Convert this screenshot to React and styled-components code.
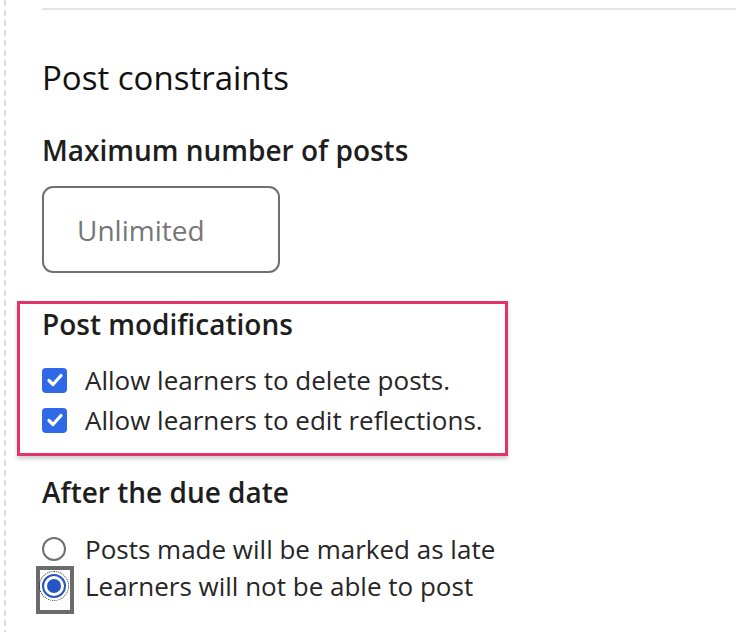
import React from 'react';
import styled, { createGlobalStyle } from 'styled-components';

const GlobalStyle = createGlobalStyle`
  html, body {
    margin: 0;
    padding: 0;
    background: #fff;
  }
  body {
    font-family: "Open Sans", "Noto Sans", sans-serif;
    color: #262626;
  }
`;

const Page = styled.div`
  width: 736px;
  height: 632px;
  overflow: hidden;
  display: flex;
  background-image: linear-gradient(#dcdcdc 60%, transparent 60%);
  background-size: 2px 10px;
  background-repeat: repeat-y;
  background-position: 4px 0;
`;

const Content = styled.div`
  flex: 1;
  margin-left: 42px;
  border-top: 2px solid #e5e5e5;
  margin-top: 8px;
  padding-top: 45px;
`;

const Title = styled.h2`
  margin: 0 0 31px;
  font-size: 33px;
  line-height: 45px;
  font-weight: 500;
  color: #111;
`;

const Label = styled.h3`
  margin: 0;
  font-size: 28px;
  line-height: 38px;
  font-weight: 600;
  color: #1e1e1e;
`;

const Input = styled.div`
  width: 238px;
  height: 87px;
  box-sizing: border-box;
  margin-top: 17px;
  border: 2px solid #707070;
  border-radius: 11px;
  display: flex;
  align-items: center;
  padding-left: 33px;
  font-size: 28px;
  color: #767676;
`;

const Highlight = styled.div`
  margin: 28px 0 0 -25px;
  width: 491px;
  box-sizing: border-box;
  border: 3px solid #e2336a;
  box-shadow: 0 3px 4px rgba(0, 0, 0, 0.2);
  padding: 1px 0 14px 22px;
`;

const Options = styled.div`
  display: flex;
  flex-direction: column;
  gap: ${p => p.$gap}px;
  margin-top: ${p => p.$top}px;
`;

const Option = styled.label`
  display: flex;
  align-items: center;
  gap: ${p => p.$gap || 18}px;
  font-size: 26px;
  line-height: 38px;
  height: ${p => p.$h || 38}px;
  white-space: nowrap;
  color: #262626;
`;

const Box = styled.span`
  width: 25px;
  height: 25px;
  border-radius: 4px;
  background: #3069e8;
  display: flex;
  align-items: center;
  justify-content: center;
  flex-shrink: 0;
`;

const Radio = styled.span`
  position: relative;
  width: 24px;
  height: 24px;
  box-sizing: border-box;
  border-radius: 50%;
  border: 2px solid ${p => (p.$checked ? '#2454c5' : '#707070')};
  display: flex;
  align-items: center;
  justify-content: center;
  flex-shrink: 0;
  &::after {
    content: '';
    display: ${p => (p.$checked ? 'block' : 'none')};
    width: 14px;
    height: 14px;
    border-radius: 50%;
    background: #2454c5;
  }
`;

const Focus = styled.span`
  position: relative;
  display: flex;
  flex-shrink: 0;
  & > span {
    outline: 1px dotted #222;
    outline-offset: 2px;
  }
  &::before {
    content: '';
    position: absolute;
    left: -6px;
    top: -8px;
    width: 38px;
    height: 48px;
    box-sizing: border-box;
    border: 4px solid #6b6b6b;
  }
`;

const Section = styled.div`
  margin-top: ${p => p.$top}px;
`;

const Check = () => (
  <svg width="20" height="20" viewBox="0 0 20 20">
    <path d="M4 10.5l4 4 8-9" fill="none" stroke="#fff" strokeWidth="3.2" strokeLinecap="round" strokeLinejoin="round" />
  </svg>
);

export default function App() {
  return (
    <Page>
      <GlobalStyle />
      <Content>
        <Title>Post constraints</Title>
        <Label>Maximum number of posts</Label>
        <Input>Unlimited</Input>
        <Highlight>
          <Label>Post modifications</Label>
          <Options $top={18} $gap={2}>
            <Option><Box><Check /></Box>Allow learners to delete posts.</Option>
            <Option><Box><Check /></Box>Allow learners to edit reflections.</Option>
          </Options>
        </Highlight>
        <Section $top={17}>
          <Label>After the due date</Label>
          <Options $top={19} $gap={0}>
            <Option $gap={19} $h={37}><Radio />Posts made will be marked as late</Option>
            <Option $gap={19} $h={37}>
              <Focus><Radio $checked /></Focus>
              Learners will not be able to post
            </Option>
          </Options>
        </Section>
      </Content>
    </Page>
  );
}
